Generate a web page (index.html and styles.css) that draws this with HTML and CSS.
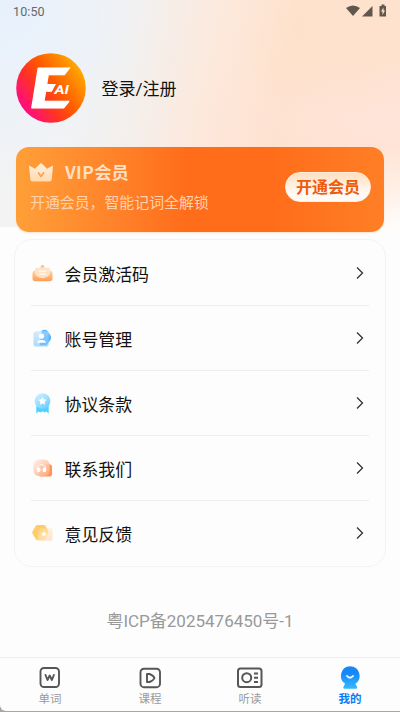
FILE: index.html
```html
<!DOCTYPE html>
<html lang="zh-CN">
<head>
<meta charset="utf-8">
<title>我的</title>
<link rel="stylesheet" href="styles.css">
</head>
<body>
<div class="screen">
  <header class="hero">
    <div class="status">
      <span>10:50</span>
      <svg width="42" height="16" viewBox="0 0 42 16" fill="#62574d">
        <path d="M0 3Q7-2 14 3L7 11Z"/>
        <path d="M26.500 1V11.500H16Z"/>
        <path d="M34 1h1.500V-.5h3V1H40v10.500h-6.500V1Z"/>
        <path d="M37.500 2.500l-2.500 4h1.500v3.500l2.500-4.500H37.500Z" fill="#fee3cf"/>
      </svg>
    </div>
    <div class="profile">
      <svg class="avatar" width="70" height="70" viewBox="0 0 70 70">
        <defs>
          <linearGradient id="logo" x1=".08" y1=".8" x2=".92" y2=".22">
            <stop offset="0" stop-color="#ff0888"/><stop offset=".35" stop-color="#ff3521"/><stop offset=".58" stop-color="#ff5a00"/><stop offset="1" stop-color="#ffa900"/>
          </linearGradient>
          <clipPath id="notch"><path d="M0 0H70V13L55 14 45 27H70V29H41L34 42V46H70V48H54L46 58V70H0Z"/></clipPath>
        </defs>
        <circle cx="35" cy="35" r="34.800" fill="url(#logo)"/>
        <g clip-path="url(#notch)"><text class="logo-e" transform="matrix(1.34 0 -.16 1 11 55)">E</text></g>
        <text class="logo-ai" x="38.500" y="40.500" textLength="14.500" lengthAdjust="spacingAndGlyphs">AI</text>
      </svg>
      <span class="login">登录/注册</span>
    </div>
  </header>

  <section class="vip">
    <div class="vip-info">
      <div class="vip-title">
        <svg width="26" height="20" viewBox="0 0 26 20">
          <defs><linearGradient id="crown" x2="0" y2="1"><stop stop-color="#fff2df"/><stop offset="1" stop-color="#ffd9ad"/></linearGradient></defs>
          <path d="M0 2.500l6 3.200 5-5q1-1 2 0l5 5 6-3.200-1.300 14q-.2 2-2.200 2h-17q-2 0-2.200-2Z" fill="url(#crown)"/>
          <path d="M9.500 10l2.500 3.500 2.500-3.500" fill="none" stroke="#f9a35b" stroke-width="1.800" stroke-linecap="round" stroke-linejoin="round"/>
        </svg>
        <strong><span class="latin">VIP</span>会员</strong>
      </div>
      <p>开通会员，智能记词全解锁</p>
    </div>
    <span class="vip-button">开通会员</span>
  </section>

  <ul class="menu">
    <li>
      <svg class="icon" viewBox="0 0 22 22">
        <defs><linearGradient id="mail" x2="0" y2="1"><stop stop-color="#ffd3a8"/><stop offset="1" stop-color="#ff9c55"/></linearGradient></defs>
        <path d="M2 8q-1.500 1-1.500 3v5q0 3 3 3h15q3 0 3-3v-5q0-2-1.500-3l-9 4Z" fill="url(#mail)"/>
        <path d="M3 7q0-2 2-2h3q1-2 3-2t3 2h3q2 0 2 2v4q-1 4-8 5-7-1-8-5Z" fill="#ffe1c4"/>
        <circle cx="11" cy="3.500" r="1.500" fill="#ffbd85"/>
        <path d="M7 8.500h8M7 11.500h8" stroke="#fff" stroke-width="1.200"/>
      </svg>
      <span>会员激活码</span><svg class="arrow" viewBox="0 0 8 14"><path d="M1 1.500 6.500 7 1 12.500"/></svg>
    </li>
    <li>
      <svg class="icon" viewBox="0 0 22 22">
        <defs><linearGradient id="acct" x2="0" y2="1"><stop stop-color="#b9e2ff"/><stop offset="1" stop-color="#78bfff"/></linearGradient></defs>
        <path d="M10 3q3-2.500 6 0l3 4q2 3 0 6l-4 5H8Z" fill="#55b2ff"/>
        <rect x="1.500" y="3.500" width="16" height="16" rx="3" fill="url(#acct)" opacity=".6"/>
        <circle cx="10" cy="8.500" r="2.700" fill="#fff"/><path d="M5.500 15.500q0-2.800 4.500-2.800t4.500 2.800Z" fill="#fff"/>
      </svg>
      <span>账号管理</span><svg class="arrow" viewBox="0 0 8 14"><path d="M1 1.500 6.500 7 1 12.500"/></svg>
    </li>
    <li>
      <svg class="icon" viewBox="0 0 22 22">
        <defs><linearGradient id="medal" x2=".7" y2="1"><stop stop-color="#d8f3ff"/><stop offset="1" stop-color="#6dceff"/></linearGradient></defs>
        <path d="M4.500 13h13v8.500l-2.500-2-1.500 1q-2.500-2-5 0l-1.500-1-2.500 2Z" fill="#4bd3ff"/>
        <circle cx="11" cy="8.500" r="8.300" fill="url(#medal)"/>
        <path d="M11 4l1.400 2.600 3 .5-2.200 2.100.5 3-2.700-1.400-2.700 1.400.5-3-2.200-2.100 3-.5Z" fill="#fff"/>
      </svg>
      <span>协议条款</span><svg class="arrow" viewBox="0 0 8 14"><path d="M1 1.500 6.500 7 1 12.500"/></svg>
    </li>
    <li>
      <svg class="icon" viewBox="0 0 22 22">
        <defs><linearGradient id="help" x2="1" y2="1"><stop stop-color="#fff0e9"/><stop offset="1" stop-color="#ffa777"/></linearGradient></defs>
        <rect x="7" y="6.500" width="14" height="13" rx="3" fill="#ff945a"/>
        <rect x="1.500" y="1.500" width="17" height="17.500" rx="6" fill="url(#help)" opacity=".92"/>
        <path d="M5.500 12q0-5 4.500-5t4.500 5" fill="none" stroke="#fff" stroke-width="1"/>
        <ellipse cx="7" cy="12.500" rx="2" ry="2.500" fill="#fff"/><ellipse cx="13" cy="12.500" rx="2" ry="2.500" fill="#fff"/>
      </svg>
      <span>联系我们</span><svg class="arrow" viewBox="0 0 8 14"><path d="M1 1.500 6.500 7 1 12.500"/></svg>
    </li>
    <li>
      <svg class="icon" viewBox="0 0 22 22">
        <defs><linearGradient id="feed" x2="1" y2="1"><stop stop-color="#ffe9c6" stop-opacity=".2"/><stop offset="1" stop-color="#ffe3c6"/></linearGradient></defs>
        <path d="M4 3q.5-1 2-1h6q1.500 0 2 1l3 6q.5 1 0 2l-3 6q-.5 1-2 1H6q-1.500 0-2-1l-3.500-6q-.6-1 0-2Z" fill="#ffcc68"/>
        <rect x="6" y="5.500" width="15.500" height="13" rx="2" fill="url(#feed)"/>
        <path d="M12.500 8.500l1 2 2 .3-1.400 1.400.3 2-1.900-1-1.900 1 .3-2-1.400-1.400 2-.3Z" fill="#fff"/>
      </svg>
      <span>意见反馈</span><svg class="arrow" viewBox="0 0 8 14"><path d="M1 1.500 6.500 7 1 12.500"/></svg>
    </li>
  </ul>

  <p class="record">粤ICP备2025476450号-1</p>

  <nav class="tabs">
    <div class="tab">
      <svg width="28" height="24" viewBox="0 0 28 24" fill="none" stroke="#565656" stroke-width="1.900"><rect x="4.500" y="2" width="18.500" height="19" rx="3.500"/><path d="M9.500 9l2 5 2.200-4.500 2.200 4.500 2-5" stroke-linecap="round" stroke-linejoin="round"/></svg>
      <span>单词</span>
    </div>
    <div class="tab">
      <svg width="28" height="24" viewBox="0 0 28 24" fill="none" stroke="#565656" stroke-width="1.900"><rect x="4.500" y="2.700" width="19.500" height="18.500" rx="3.500"/><path d="M11 8h2.500q4 1.500 5 4-1 2.500-5 4H11Z" stroke-linejoin="round"/></svg>
      <span>课程</span>
    </div>
    <div class="tab">
      <svg width="28" height="24" viewBox="0 0 28 24" fill="none" stroke="#565656" stroke-width="2"><rect x="2" y="2.500" width="23.500" height="18.500" rx="2.500"/><circle cx="10.700" cy="11.700" r="4.500"/><path d="M18 7.500h4M18 11.700h4M18 15.900h4"/></svg>
      <span>听读</span>
    </div>
    <div class="tab active">
      <svg width="28" height="24" viewBox="0 0 28 24"><defs><linearGradient id="me" x2="0" y2="1"><stop offset=".3" stop-color="#1687fa"/><stop offset="1" stop-color="#35baff"/></linearGradient></defs><path d="M14 .3a9.500 9.500 0 0 1 5.500 17.300q.2 1.500 1.500 3.200.7 2-1 2H8.500q-1.700 0-1-2 1.300-1.700 1.500-3.200A9.500 9.500 0 0 1 14 .3Z" fill="url(#me)"/><path d="M11 10q3 3.500 6 0" fill="none" stroke="#fff" stroke-width="1.800" stroke-linecap="round"/></svg>
      <span>我的</span>
    </div>
  </nav>
</div>
</body>
</html>
```
FILE: styles.css
```css
* { box-sizing: border-box; }
body { margin: 0; background: #a8a5a3; font-family: Roboto, "Noto Sans CJK SC", sans-serif; color: #111; }
p, ul { margin: 0; padding: 0; }
.screen { display: flex; flex-direction: column; width: 400px; height: 711px; overflow: hidden; border-bottom-left-radius: 6px; background: #fdfdfd; }
.hero {
  flex: none; height: 227px;
  background:
    radial-gradient(ellipse 120px 90px at 100% 104%, #fff 0, rgba(255,255,255,0) 100%),
    radial-gradient(ellipse 170px 190px at 0 0, #e6f1fd 0, rgba(230,241,253,0) 100%),
    radial-gradient(ellipse 240px 70px at 100% 54%, rgba(255,228,218,.9) 0, rgba(255,228,218,0) 100%),
    linear-gradient(101deg, #f3f3f3 20%, #f4efec 34%, #fde8da 53%, #fee1cb 68%, #fee3d0 100%);
}
.status { display: flex; justify-content: space-between; height: 24px; padding: 5px 12px 0 13px; font-size: 12.500px; line-height: 14px; color: #66686a; letter-spacing: .1px; }
.status svg { overflow: visible; }
.profile { display: flex; align-items: center; gap: 16px; height: 70px; margin-top: 29px; padding-left: 15.500px; }
.avatar { display: block; }
.logo-e { font: 700 55px Inter, sans-serif; fill: #fff; stroke: #fff; stroke-width: 1px; stroke-linejoin: round; }
.logo-ai { font: italic 700 13px Roboto, sans-serif; fill: #fff; }
.login { font-size: 17px; line-height: 24px; padding-top: 2px; }
.vip { display: flex; flex: none; align-items: flex-start; justify-content: space-between; height: 85px; margin: -80px 16px 0; padding: 14px 13px 0 13px; border-radius: 13px; background: linear-gradient(90deg, #ff9f38, #ff8129 28%, #ff6c1a 47%, #ff6c1a 68%, #ff7f25); box-shadow: 0 1px 2px #ffe2cc; }
.vip-title { display: flex; align-items: center; gap: 10px; height: 24px; }
.vip-title strong { font-family: "Noto Sans CJK SC", sans-serif; font-size: 17.300px; line-height: 22px; padding-bottom: 2px; font-weight: 700; color: #ffdfc0; }
.latin { letter-spacing: .4px; }
.vip p { margin: 7px 0 0 1px; font-size: 14.900px; line-height: 22px; color: #ffd2ae; }
.vip-button { width: 86px; height: 30px; margin-top: 11px; border-radius: 15px; border: 1px solid #fff0df; background: linear-gradient(#ffdfc0, #fffaf5 75%); text-align: center; font-size: 16px; line-height: 29px; font-weight: 700; color: #ec5c0e; }
.menu { flex: none; list-style: none; height: 328px; margin: 7px 14px 0; padding: 1px 16px; border: 1px solid #f3f3f3; border-radius: 18px; background: #fdfdfd; }
.menu li { display: flex; align-items: center; height: 65px; border-bottom: 1px solid #ededed; font-size: 16.900px; line-height: 24px; }
.menu li span { padding-top: 3px; }
.menu li:last-child { height: 64px; border-bottom: 0; }
.icon { width: 21px; height: 21px; margin: 0 11.500px 0 1px; }
.arrow { width: 8px; height: 14px; margin: 0 5px 0 auto; fill: none; stroke: #333; stroke-width: 1.300; }
.record { margin-top: 42px; text-align: center; font-size: 17px; line-height: 24px; color: #999; }
.tabs { display: flex; flex: none; height: 54px; margin-top: auto; border-top: 1px solid #eee; }
.tab { display: flex; flex: 1; flex-direction: column; align-items: center; padding-top: 8px; font-size: 11.500px; line-height: 18px; color: #999; }
.tab svg { display: block; flex: none; }
.active { color: #0a7cf5; font-weight: 700; }
```
